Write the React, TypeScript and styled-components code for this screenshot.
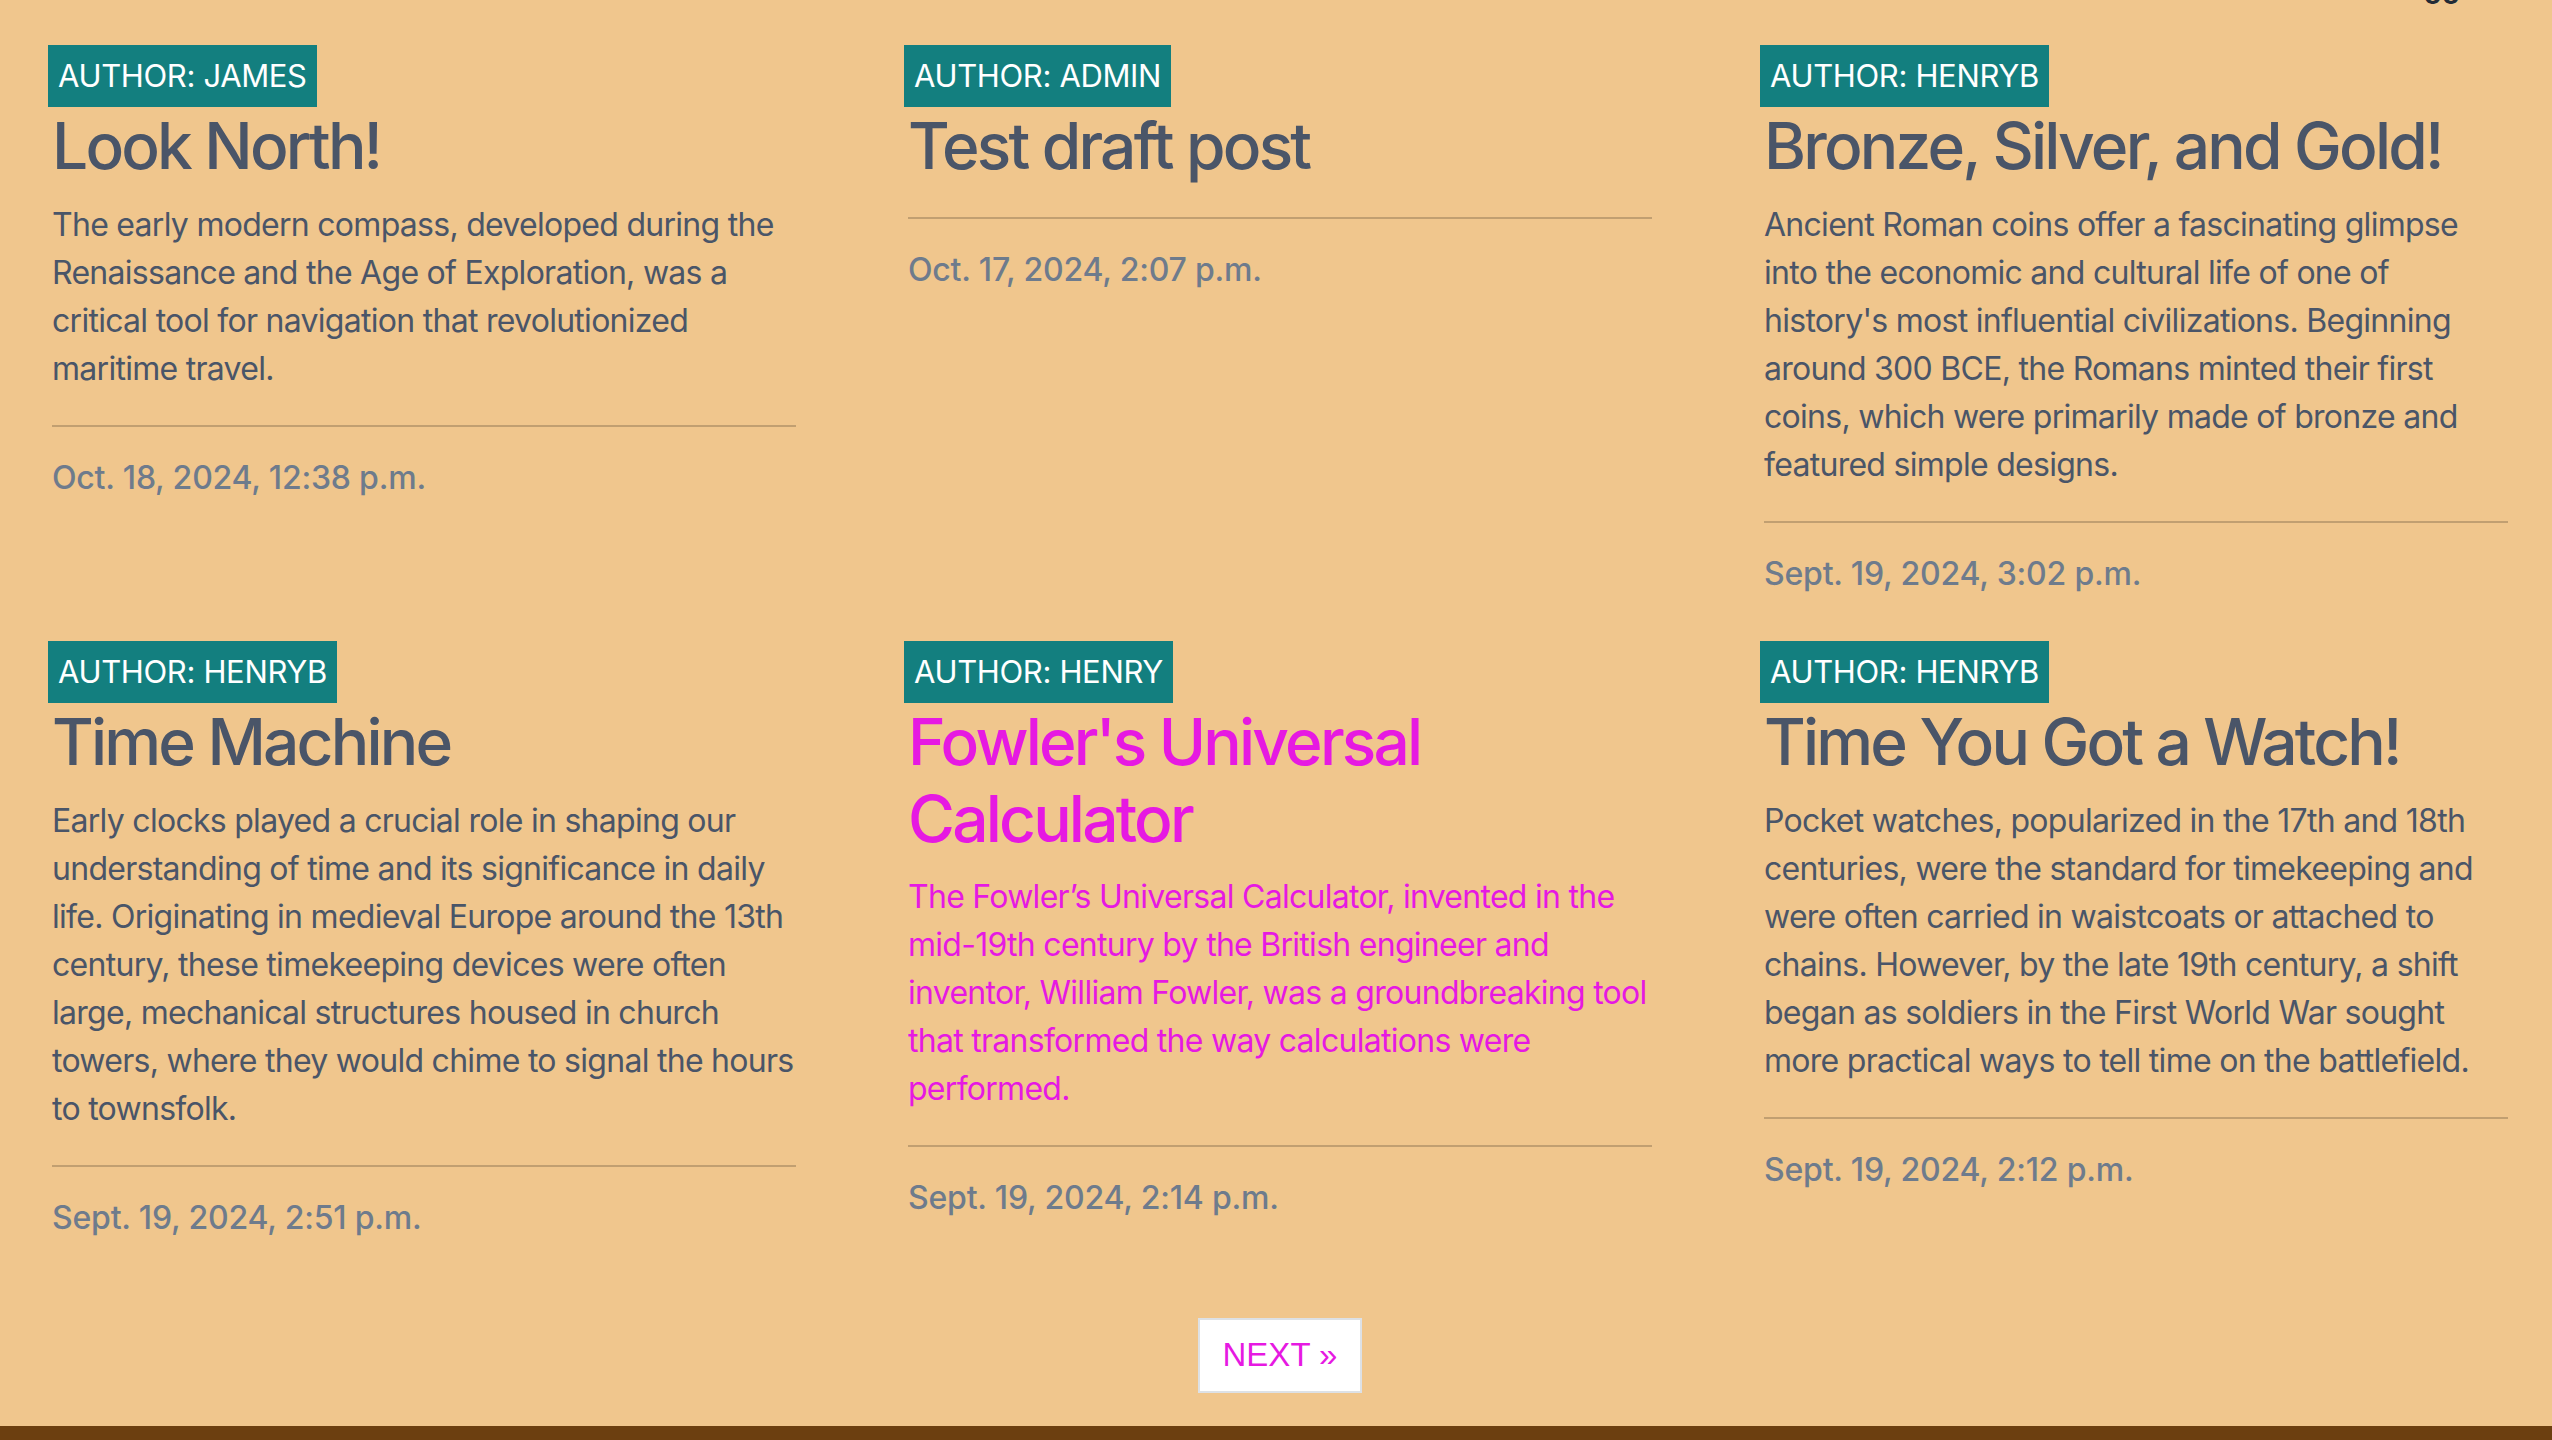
import React from "react";
import styled, { createGlobalStyle } from "styled-components";

const GlobalStyle = createGlobalStyle`
  html, body {
    margin: 0;
    padding: 0;
    background: #f0c68d;
  }
  body {
    font-family: Inter, "Noto Sans", sans-serif;
    color: #4a5568;
  }
`;

const Page = styled.div`
  min-height: 1440px;
  display: flex;
  flex-direction: column;
  background: #f0c68d;
`;

const TopNav = styled.nav`
  display: flex;
  justify-content: flex-end;
  height: 6px;
  overflow: hidden;
  padding-right: 92px;
`;

const NavLink = styled.span`
  font-family: Inter, sans-serif;
  font-size: 30px;
  font-weight: 600;
  line-height: 30px;
  color: #222b36;
  margin-top: -22px;
`;

const Main = styled.main`
  padding: 39px 44px 0 52px;
  flex: 1;
`;

const PostGrid = styled.div`
  display: grid;
  grid-template-columns: repeat(3, 744px);
  column-gap: 112px;
  row-gap: 43px;
  align-items: start;
`;

const Card = styled.article`
  display: flex;
  flex-direction: column;
  align-items: flex-start;
`;

const AuthorBadge = styled.span`
  display: inline-block;
  margin-left: -4px;
  padding: 8px 10px;
  background: #137f7f;
  color: #ffffff;
  font-family: Inter, "Noto Sans", sans-serif;
  font-size: 31px;
  line-height: 46px;
  letter-spacing: -0.35px;
  text-transform: uppercase;
`;

const Title = styled.h2<{ $active?: boolean }>`
  margin: 1px 0 0;
  font-size: 64px;
  font-weight: 500;
  line-height: 1.2;
  letter-spacing: -2.8px;
  color: ${(p) => (p.$active ? "#e619e2" : "#4a5568")};
`;

const Excerpt = styled.p<{ $active?: boolean }>`
  margin: 16px 0 0;
  font-size: 32px;
  line-height: 48px;
  letter-spacing: -0.72px;
  color: ${(p) => (p.$active ? "#e619e2" : "#4a5568")};
`;

const Divider = styled.hr`
  align-self: stretch;
  margin: 32px 0 27px;
  border: 0;
  border-top: 2px solid #c19f71;
`;

const PostDate = styled.time`
  font-size: 32px;
  line-height: 48px;
  font-weight: 500;
  letter-spacing: -0.2px;
  color: #6e7b8c;
`;

const Pager = styled.div`
  display: flex;
  justify-content: center;
  padding: 76px 0 33px;
`;

const NextButton = styled.a`
  display: inline-flex;
  align-items: center;
  justify-content: center;
  box-sizing: border-box;
  height: 75px;
  width: 164px;
  background: #ffffff;
  border: 2px solid #dde1e6;
  color: #e619e2;
  font-family: "Liberation Sans", Arial, sans-serif;
  font-size: 33px;
  text-decoration: none;
`;

const Footer = styled.footer`
  height: 14px;
  background: #6c3f10;
`;

interface Post {
  author: string;
  title: string;
  excerpt?: string;
  date: string;
  active?: boolean;
}

const posts: Post[] = [
  {
    author: "james",
    title: "Look North!",
    excerpt:
      "The early modern compass, developed during the Renaissance and the Age of Exploration, was a critical tool for navigation that revolutionized maritime travel.",
    date: "Oct. 18, 2024, 12:38 p.m.",
  },
  {
    author: "admin",
    title: "Test draft post",
    date: "Oct. 17, 2024, 2:07 p.m.",
  },
  {
    author: "henryb",
    title: "Bronze, Silver, and Gold!",
    excerpt:
      "Ancient Roman coins offer a fascinating glimpse into the economic and cultural life of one of history's most influential civilizations. Beginning around 300 BCE, the Romans minted their first coins, which were primarily made of bronze and featured simple designs.",
    date: "Sept. 19, 2024, 3:02 p.m.",
  },
  {
    author: "henryb",
    title: "Time Machine",
    excerpt:
      "Early clocks played a crucial role in shaping our understanding of time and its significance in daily life. Originating in medieval Europe around the 13th century, these timekeeping devices were often large, mechanical structures housed in church towers, where they would chime to signal the hours to townsfolk.",
    date: "Sept. 19, 2024, 2:51 p.m.",
  },
  {
    author: "henry",
    title: "Fowler's Universal Calculator",
    excerpt:
      "The Fowler\u2019s Universal Calculator, invented in the mid-19th century by the British engineer and inventor, William Fowler, was a groundbreaking tool that transformed the way calculations were performed.",
    date: "Sept. 19, 2024, 2:14 p.m.",
    active: true,
  },
  {
    author: "henryb",
    title: "Time You Got a Watch!",
    excerpt:
      "Pocket watches, popularized in the 17th and 18th centuries, were the standard for timekeeping and were often carried in waistcoats or attached to chains. However, by the late 19th century, a shift began as soldiers in the First World War sought more practical ways to tell time on the battlefield.",
    date: "Sept. 19, 2024, 2:12 p.m.",
  },
];

const PostCard: React.FC<{ post: Post }> = ({ post }) => (
  <Card>
    <AuthorBadge>Author: {post.author}</AuthorBadge>
    <Title $active={post.active}>{post.title}</Title>
    {post.excerpt && <Excerpt $active={post.active}>{post.excerpt}</Excerpt>}
    <Divider />
    <PostDate>{post.date}</PostDate>
  </Card>
);

export default function App() {
  return (
    <Page>
      <GlobalStyle />
      <TopNav>
        <NavLink>oo</NavLink>
      </TopNav>
      <Main>
        <PostGrid>
          {posts.map((post) => (
            <PostCard key={post.title} post={post} />
          ))}
        </PostGrid>
        <Pager>
          <NextButton href="#">NEXT &raquo;</NextButton>
        </Pager>
      </Main>
      <Footer />
    </Page>
  );
}
